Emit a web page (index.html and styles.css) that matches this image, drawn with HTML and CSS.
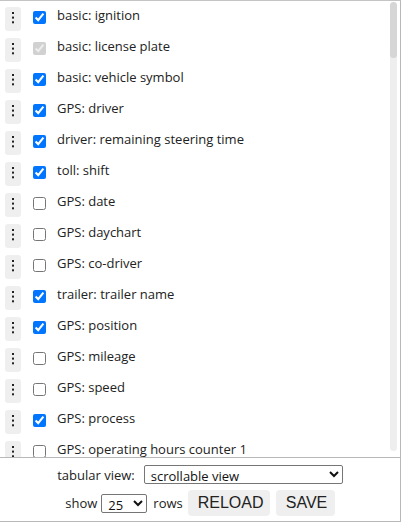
FILE: index.html
```html
<!DOCTYPE html>
<html>

<head>
    <meta content="width=device-width, initial-scale=1" name="viewport" />
    <link rel="stylesheet" href="styles.css">
</head>

<body>
    <div id="columnPanel">
        <div id="listWrap">
            <div id="columnList">
                <div class="colRow"><span class="dragHandle"></span><input type="checkbox" checked><span class="colName">basic: ignition</span></div>
                <div class="colRow"><span class="dragHandle"></span><input type="checkbox" checked disabled><span class="colName">basic: license plate</span></div>
                <div class="colRow"><span class="dragHandle"></span><input type="checkbox" checked><span class="colName">basic: vehicle symbol</span></div>
                <div class="colRow"><span class="dragHandle"></span><input type="checkbox" checked><span class="colName">GPS: driver</span></div>
                <div class="colRow"><span class="dragHandle"></span><input type="checkbox" checked><span class="colName">driver: remaining steering time</span></div>
                <div class="colRow"><span class="dragHandle"></span><input type="checkbox" checked><span class="colName">toll: shift</span></div>
                <div class="colRow"><span class="dragHandle"></span><input type="checkbox"><span class="colName">GPS: date</span></div>
                <div class="colRow"><span class="dragHandle"></span><input type="checkbox"><span class="colName">GPS: daychart</span></div>
                <div class="colRow"><span class="dragHandle"></span><input type="checkbox"><span class="colName">GPS: co-driver</span></div>
                <div class="colRow"><span class="dragHandle"></span><input type="checkbox" checked><span class="colName">trailer: trailer name</span></div>
                <div class="colRow"><span class="dragHandle"></span><input type="checkbox" checked><span class="colName">GPS: position</span></div>
                <div class="colRow"><span class="dragHandle"></span><input type="checkbox"><span class="colName">GPS: mileage</span></div>
                <div class="colRow"><span class="dragHandle"></span><input type="checkbox"><span class="colName">GPS: speed</span></div>
                <div class="colRow"><span class="dragHandle"></span><input type="checkbox" checked><span class="colName">GPS: process</span></div>
                <div class="colRow"><span class="dragHandle"></span><input type="checkbox"><span class="colName">GPS: operating hours counter 1</span></div>
            </div>
            <div class="scrollTrack">
                <div class="scrollThumb"></div>
            </div>
        </div>
        <div id="panelFooter">
            <div class="footerLine">
                <label class="footerLabel" for="viewSelect">tabular view:</label>
                <select id="viewSelect">
                    <option>scrollable view</option>
                    <option>paged view</option>
                </select>
            </div>
            <div class="footerLine">
                <span class="footerLabel">show</span>
                <select id="rowsSelect">
                    <option>25</option>
                    <option>50</option>
                    <option>100</option>
                </select>
                <span class="footerLabel">rows</span>
                <button id="btnReload">RELOAD</button>
                <button id="btnSave">SAVE</button>
            </div>
        </div>
    </div>
</body>

</html>
```

FILE: styles.css
```css
html,
body {
    margin: 0;
    background-color: #ffffff;
    font-family: "Open Sans", "Liberation Sans", sans-serif;
    color: #222222;
}

#columnPanel {
    width: 400px;
    border-top: 1px solid #c4c4c4;
    border-right: 1px solid #b8b8b8;
    border-bottom: 1px solid #b8b8b8;
    display: flex;
    flex-direction: column;
}

#listWrap {
    height: 456px;
    display: flex;
    flex-direction: row;
}

#columnList {
    flex: 1;
    overflow: hidden;
}

.scrollTrack {
    width: 7px;
    margin: 1px 3px 6px 0;
    border-radius: 4px;
    background-color: #eeeeee;
}

.scrollThumb {
    height: 56px;
    border-radius: 4px;
    background-color: #d6d6d6;
}

.colRow {
    height: 31px;
    display: flex;
    align-items: flex-start;
    padding-left: 5px;
}

/* three dots made with box-shadow */
.dragHandle {
    width: 16px;
    height: 24px;
    margin-top: 6px;
    border-radius: 3px;
    background-color: #efefef;
    box-sizing: border-box;
    padding-top: 5px;
    display: flex;
    justify-content: center;
    flex-shrink: 0;
}

.dragHandle::before {
    content: "";
    width: 2px;
    height: 2px;
    background-color: #222222;
    box-shadow: 0 4.6px 0 #222222, 0 9.3px 0 #222222;
}

.colRow input {
    width: 13px;
    height: 13px;
    margin: 10px 0 0 12px;
    flex-shrink: 0;
}

.colName {
    font-size: 13px;
    line-height: 16px;
    margin-top: 6px;
    margin-left: 11px;
    white-space: nowrap;
}

#panelFooter {
    border-top: 1px solid #b8b8b8;
    padding: 7px 0 5px 0;
    display: flex;
    flex-direction: column;
    align-items: center;
    gap: 6px;
}

.footerLine {
    display: flex;
    align-items: center;
}

.footerLabel {
    font-size: 13px;
}

select {
    font-family: "Open Sans", "Liberation Sans", sans-serif;
    font-size: 13px;
    height: 19px;
    padding: 0 0 0 2px;
    border: 1px solid #767676;
    border-radius: 2px;
    background-color: #ffffff;
    color: #111111;
}

#viewSelect {
    width: 199px;
    margin-left: 9px;
}

#rowsSelect {
    width: 46px;
    margin: 1px 6px 0 4px;
}

button {
    height: 26px;
    border: none;
    border-radius: 4px;
    background-color: #efefef;
    font-family: "Liberation Sans", sans-serif;
    font-size: 16px;
    color: #222222;
    padding: 0 10px;
}

#btnReload {
    width: 82px;
    margin-left: 5px;
}

#btnSave {
    width: 59px;
    margin-left: 6px;
}
```
